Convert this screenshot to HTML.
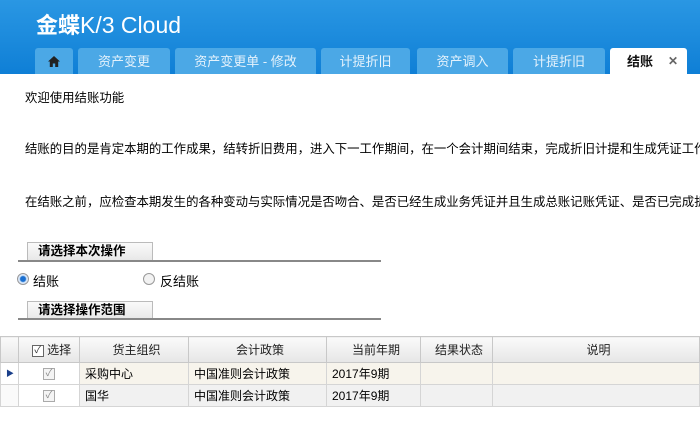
<!DOCTYPE html>
<html><head><meta charset="utf-8"><style>
*{margin:0;padding:0;box-sizing:border-box}
body{width:700px;height:432px;overflow:hidden;background:#fff;font-family:"Liberation Sans","Noto Sans CJK SC",sans-serif;font-size:12px;color:#000;position:relative}
.hdr{position:absolute;left:0;top:0;width:700px;height:74px;background:linear-gradient(#2a97e3,#0f7fd6)}
.logo{position:absolute;left:36px;top:8px;color:#fff;font-size:22px;letter-spacing:0}
.logo i{font-style:normal;font-family:"Liberation Sans",sans-serif;font-size:23px;font-weight:normal}
.tab{position:absolute;top:48px;height:26px;background:#4ba8e6;border-radius:3px 3px 0 0;color:#e4f2fc;font-size:13px;text-align:center;line-height:27px}
.tab.act{background:#fff;color:#111;font-weight:bold}
.t{position:absolute;left:25px;font-size:12.4px;white-space:nowrap}
.box{position:absolute;left:27px;width:126px;height:18px;border:1px solid #bbb;border-bottom:none;background:linear-gradient(#fafafa,#e8e8e8);font-weight:bold;font-size:12.5px;padding-left:10px;line-height:17px}
.ln{position:absolute;left:18px;width:363px;height:2px;background:#888}
.radio{position:absolute;width:12px;height:12px;border-radius:50%;border:1px solid #999;background:#f2f2f2}
table{position:absolute;left:0;top:336px;border-collapse:collapse;width:700px;font-size:12px}
td{height:22px;border:1px solid #d5d5d5;padding-left:5px;white-space:nowrap}
tr.h td{height:26px;background:linear-gradient(#fafafa,#e6e6e6);text-align:center;color:#222;border-color:#c8c8c8}
.cb{display:inline-block;width:12px;height:12px;border:1px solid #aaa;background:#f4f4f4;font-size:10px;line-height:10px;text-align:center;color:#888;vertical-align:middle}
</style></head><body>
<div class="hdr">
<div class="logo"><b>金蝶</b><i>K/3 Cloud</i></div>
<div class="tab" style="left:35px;width:38px"><svg width="12" height="11" viewBox="0 0 12 11" style="margin-top:8px"><path d="M6 0L0 5.5h1.8V11h3V7.5h2.4V11h3V5.5H12z" fill="#222"/></svg></div>
<div class="tab" style="left:78px;width:92px">资产变更</div>
<div class="tab" style="left:175px;width:141px">资产变更单 - 修改</div>
<div class="tab" style="left:321px;width:89px">计提折旧</div>
<div class="tab" style="left:417px;width:91px">资产调入</div>
<div class="tab" style="left:513px;width:92px">计提折旧</div>
<div class="tab act" style="left:610px;width:77px;text-align:left;padding-left:17px">结账<span style="position:absolute;left:58px;color:#666;font-size:12px">✕</span></div>
</div>
<div class="t" style="top:88px">欢迎使用结账功能</div>
<div class="t" style="top:139px">结账的目的是肯定本期的工作成果，结转折旧费用，进入下一工作期间，在一个会计期间结束，完成折旧计提和生成凭证工作后</div>
<div class="t" style="top:192px">在结账之前，应检查本期发生的各种变动与实际情况是否吻合、是否已经生成业务凭证并且生成总账记账凭证、是否已完成折旧</div>
<div class="box" style="top:242px">请选择本次操作</div>
<div class="ln" style="top:260px"></div>
<div class="radio" style="left:17px;top:273px;background:radial-gradient(#1a6fd0 2.5px,#cfe3f7 3.5px,#eef 6px)"></div>
<div class="t" style="left:33px;top:271px;font-size:13px">结账</div>
<div class="radio" style="left:143px;top:273px"></div>
<div class="t" style="left:160px;top:271px;font-size:13px">反结账</div>
<div class="box" style="top:301px">请选择操作范围</div>
<div class="ln" style="top:318px"></div>
<table>
<colgroup><col style="width:18px"><col style="width:61px"><col style="width:109px"><col style="width:138px"><col style="width:94px"><col style="width:72px"><col></colgroup>
<tr class="h"><td></td><td><span class="cb" style="color:#333;border-color:#666;background:#fff">✓</span> 选择</td><td>货主组织</td><td>会计政策</td><td>当前年期</td><td>结果状态</td><td>说明</td></tr>
<tr style="background:#f7f4ec"><td style="background:#fff;color:#1a3f8a;font-size:8px">▶</td><td style="background:#fff;text-align:center;padding:0"><span class="cb">✓</span></td><td>采购中心</td><td>中国准则会计政策</td><td>2017年9期</td><td></td><td></td></tr>
<tr style="background:#f1f1f1"><td style="background:#fafafa"></td><td style="background:#fff;text-align:center;padding:0"><span class="cb">✓</span></td><td>国华</td><td>中国准则会计政策</td><td>2017年9期</td><td></td><td></td></tr>
</table>
</body></html>
